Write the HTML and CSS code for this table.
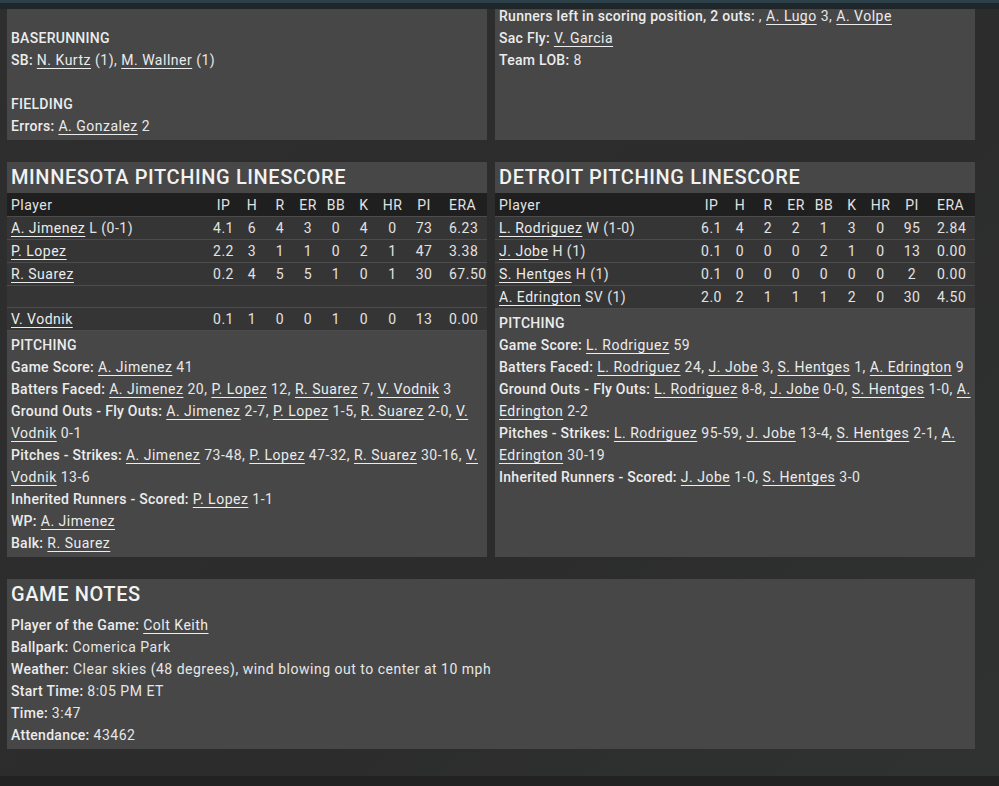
FILE: index.html
```html
<!DOCTYPE html>
<html>
<head>
<meta charset="utf-8">
<link rel="stylesheet" href="styles.css">
</head>
<body>
<div class="topbar"></div>
<main class="page">
  <section class="row">
    <div class="panel plain">
      <div class="line"></div>
      <div class="line"><b>BASERUNNING</b></div>
      <div class="line"><b>SB:</b> <a>N. Kurtz</a> (1), <a>M. Wallner</a> (1)</div>
      <div class="line"></div>
      <div class="line"><b>FIELDING</b></div>
      <div class="line"><b>Errors:</b> <a>A. Gonzalez</a> 2</div>
    </div>
    <div class="panel plain">
      <div class="line"><b>Runners left in scoring position, 2 outs:</b> , <a>A. Lugo</a> 3, <a>A. Volpe</a></div>
      <div class="line"><b>Sac Fly:</b> <a>V. Garcia</a></div>
      <div class="line"><b>Team LOB:</b> 8</div>
    </div>
  </section>

  <section class="row">
    <div class="panel">
      <h2 class="title">MINNESOTA PITCHING LINESCORE</h2>
      <table class="stats">
        <colgroup><col class="c-player"><col class="c-ip"><col class="c-n"><col class="c-n"><col class="c-n"><col class="c-n"><col class="c-n"><col class="c-hr"><col class="c-pi"><col class="c-era"></colgroup>
        <thead><tr><th>Player</th><th>IP</th><th>H</th><th>R</th><th>ER</th><th>BB</th><th>K</th><th>HR</th><th>PI</th><th>ERA</th></tr></thead>
        <tbody>
          <tr><td><a>A. Jimenez</a> L (0-1)</td><td>4.1</td><td>6</td><td>4</td><td>3</td><td>0</td><td>4</td><td>0</td><td>73</td><td>6.23</td></tr>
          <tr><td><a>P. Lopez</a></td><td>2.2</td><td>3</td><td>1</td><td>1</td><td>0</td><td>2</td><td>1</td><td>47</td><td>3.38</td></tr>
          <tr><td><a>R. Suarez</a></td><td>0.2</td><td>4</td><td>5</td><td>5</td><td>1</td><td>0</td><td>1</td><td>30</td><td>67.50</td></tr>
          <tr class="blank"><td></td><td></td><td></td><td></td><td></td><td></td><td></td><td></td><td></td><td></td></tr>
          <tr><td><a>V. Vodnik</a></td><td>0.1</td><td>1</td><td>0</td><td>0</td><td>1</td><td>0</td><td>0</td><td>13</td><td>0.00</td></tr>
        </tbody>
      </table>
      <div class="notes">
        <div class="line"><b>PITCHING</b></div>
        <div class="line"><b>Game Score:</b> <a>A. Jimenez</a> 41</div>
        <div class="line"><b>Batters Faced:</b> <a>A. Jimenez</a> 20, <a>P. Lopez</a> 12, <a>R. Suarez</a> 7, <a>V. Vodnik</a> 3</div>
        <div class="line"><b>Ground Outs - Fly Outs:</b> <a>A. Jimenez</a> 2-7, <a>P. Lopez</a> 1-5, <a>R. Suarez</a> 2-0, <a>V. Vodnik</a> 0-1</div>
        <div class="line"><b>Pitches - Strikes:</b> <a>A. Jimenez</a> 73-48, <a>P. Lopez</a> 47-32, <a>R. Suarez</a> 30-16, <a>V. Vodnik</a> 13-6</div>
        <div class="line"><b>Inherited Runners - Scored:</b> <a>P. Lopez</a> 1-1</div>
        <div class="line"><b>WP:</b> <a>A. Jimenez</a></div>
        <div class="line"><b>Balk:</b> <a>R. Suarez</a></div>
      </div>
    </div>
    <div class="panel">
      <h2 class="title">DETROIT PITCHING LINESCORE</h2>
      <table class="stats">
        <colgroup><col class="c-player"><col class="c-ip"><col class="c-n"><col class="c-n"><col class="c-n"><col class="c-n"><col class="c-n"><col class="c-hr"><col class="c-pi"><col class="c-era"></colgroup>
        <thead><tr><th>Player</th><th>IP</th><th>H</th><th>R</th><th>ER</th><th>BB</th><th>K</th><th>HR</th><th>PI</th><th>ERA</th></tr></thead>
        <tbody>
          <tr><td><a>L. Rodriguez</a> W (1-0)</td><td>6.1</td><td>4</td><td>2</td><td>2</td><td>1</td><td>3</td><td>0</td><td>95</td><td>2.84</td></tr>
          <tr><td><a>J. Jobe</a> H (1)</td><td>0.1</td><td>0</td><td>0</td><td>0</td><td>2</td><td>1</td><td>0</td><td>13</td><td>0.00</td></tr>
          <tr><td><a>S. Hentges</a> H (1)</td><td>0.1</td><td>0</td><td>0</td><td>0</td><td>0</td><td>0</td><td>0</td><td>2</td><td>0.00</td></tr>
          <tr><td><a>A. Edrington</a> SV (1)</td><td>2.0</td><td>2</td><td>1</td><td>1</td><td>1</td><td>2</td><td>0</td><td>30</td><td>4.50</td></tr>
        </tbody>
      </table>
      <div class="notes">
        <div class="line"><b>PITCHING</b></div>
        <div class="line"><b>Game Score:</b> <a>L. Rodriguez</a> 59</div>
        <div class="line"><b>Batters Faced:</b> <a>L. Rodriguez</a> 24, <a>J. Jobe</a> 3, <a>S. Hentges</a> 1, <a>A. Edrington</a> 9</div>
        <div class="line"><b>Ground Outs - Fly Outs:</b> <a>L. Rodriguez</a> 8-8, <a>J. Jobe</a> 0-0, <a>S. Hentges</a> 1-0, <a>A. Edrington</a> 2-2</div>
        <div class="line"><b>Pitches - Strikes:</b> <a>L. Rodriguez</a> 95-59, <a>J. Jobe</a> 13-4, <a>S. Hentges</a> 2-1, <a>A. Edrington</a> 30-19</div>
        <div class="line"><b>Inherited Runners - Scored:</b> <a>J. Jobe</a> 1-0, <a>S. Hentges</a> 3-0</div>
      </div>
    </div>
  </section>

  <section class="panel full">
    <h2 class="title">GAME NOTES</h2>
    <div class="notes game">
      <div class="line"><b>Player of the Game:</b> <a>Colt Keith</a></div>
      <div class="line"><b>Ballpark:</b> Comerica Park</div>
      <div class="line"><b>Weather:</b> Clear skies (48 degrees), wind blowing out to center at 10 mph</div>
      <div class="line"><b>Start Time:</b> 8:05 PM ET</div>
      <div class="line"><b>Time:</b> 3:47</div>
      <div class="line"><b>Attendance:</b> 43462</div>
    </div>
  </section>
</main>
<footer class="footer"></footer>
</body>
</html>
```

FILE: styles.css
```css
html, body {
  margin: 0;
  padding: 0;
}
body {
  background: linear-gradient(135deg, #2e2e2e 0%, #2c2c2c 60%, #303232 100%);
  color: #e6e6e6;
  font-family: Roboto, "Liberation Sans", sans-serif;
  font-size: 14px;
  line-height: 22px;
  letter-spacing: 0.036em;
  height: 786px;
  overflow: hidden;
  position: relative;
}
.topbar {
  position: absolute;
  top: 0;
  left: 0;
  right: 0;
  height: 6px;
  border-top: 3px solid #2b4048;
  background: #1f2629;
  z-index: 2;
}
.page {
  padding: 0 24px 0 7px;
}
.row {
  display: grid;
  grid-template-columns: 480px 480px;
  column-gap: 8px;
  margin-bottom: 22px;
}
.panel {
  background: #474747;
}
.plain {
  padding: 5px 4px 3px;
  height: 132px;
}
.line {
  min-height: 22px;
}
b {
  font-weight: 500;
  letter-spacing: 0.02em;
  color: #ececec;
}
a {
  color: #ececec;
  text-decoration: underline;
  text-underline-offset: 3px;
  text-decoration-thickness: 1px;
}
.title {
  margin: 0;
  padding: 0 4px;
  font-size: 20px;
  font-weight: 500;
  line-height: 31px;
  letter-spacing: 0.03em;
  color: #f2f2f2;
}
.stats {
  width: 480px;
  border-collapse: collapse;
  table-layout: fixed;
}
.c-player { width: 202px; }
.c-ip { width: 29px; }
.c-n { width: 28px; }
.c-hr { width: 29px; }
.c-pi { width: 34px; }
.c-era { width: 46px; }
.stats th {
  background: #1f1f1f;
  font-weight: 400;
  height: 23px;
  padding: 0;
  text-align: center;
  color: #e2e2e2;
  border-bottom: 1px solid #4c4c4c;
}
.stats td {
  background: #353535;
  height: 22px;
  padding: 0;
  text-align: center;
  border-bottom: 1px solid #4c4c4c;
  white-space: nowrap;
  color: #e2e2e2;
}
.stats th:first-child,
.stats td:first-child {
  text-align: left;
  padding-left: 4px;
}
.stats th:last-child,
.stats td:last-child {
  text-align: left;
  padding-left: 8px;
}
.stats tr.blank td {
  height: 21px;
}
.notes {
  padding: 3px 0 3px 4px;
}
.notes.game {
  padding: 4px 0 3px 4px;
}
.full {
  width: 968px;
}
.footer {
  position: absolute;
  left: 0;
  right: 0;
  bottom: 0;
  height: 10px;
  background: #222222;
}
```
